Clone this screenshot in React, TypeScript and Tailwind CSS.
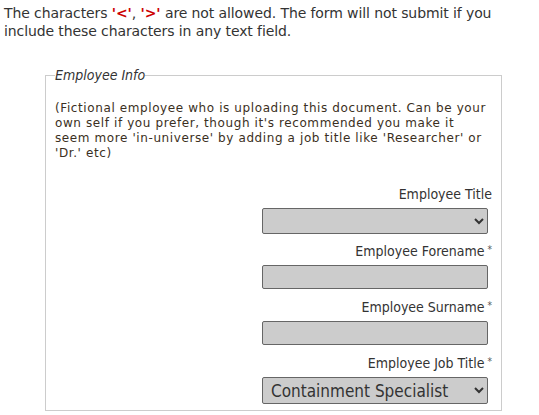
import { useState } from 'react';

const labelCls =
    "text-[14px] text-[#333] text-right leading-[18px] font-['DejaVu_Sans_Condensed','Liberation_Sans',sans-serif]";
const fieldCls = 'ml-auto mr-[4px] block w-[226px] bg-[#ccc] border border-[#666] rounded-[2px]';

const Required = () => <sup className="text-[10px] text-[#555] ml-[3px] relative -top-[3px]">*</sup>;

export default function App() {
    const [job, setJob] = useState('Containment Specialist');

    return (
        <div className="bg-white w-[539px] h-[415px] overflow-hidden text-[#333] font-['DejaVu_Sans',sans-serif]">
            <p className="px-[4px] pt-[4px] text-[14px] leading-[18px] tracking-[-0.1px]">
                The characters{' '}
                <span className="font-bold text-[#c00]">'&lt;'</span>,{' '}
                <span className="font-bold text-[#c00]">'&gt;'</span> are not allowed. The form will not submit if
                you include these characters in any text field.
            </p>

            <fieldset className="ml-[45px] mt-[25px] w-[457px] border border-[#ccc] px-[9px] pb-[6px]">
                <legend className="italic text-[14px] text-[#333] px-0 font-['DejaVu_Sans_Condensed','Liberation_Sans',sans-serif]">
                    Employee Info
                </legend>
                <p className="mt-[15px] text-[12px] leading-[15px] tracking-[0.6px] text-[#3b2f22]">
                    (Fictional employee who is uploading this document. Can be your own self if you prefer, though
                    it's recommended you make it seem more 'in-universe' by adding a job title like 'Researcher' or
                    'Dr.' etc)
                </p>

                <div className="mt-[24px] flex flex-col">
                    <label className={labelCls}>Employee Title</label>
                    <select className={`${fieldCls} mt-[5px] h-[26px]`} defaultValue="" />

                    <label className={`${labelCls} mt-[8px]`}>
                        Employee Forename<Required />
                    </label>
                    <input className={`${fieldCls} mt-[5px] h-[24px]`} />

                    <label className={`${labelCls} mt-[9px]`}>
                        Employee Surname<Required />
                    </label>
                    <input className={`${fieldCls} mt-[5px] h-[24px]`} />

                    <label className={`${labelCls} mt-[9px]`}>
                        Employee Job Title<Required />
                    </label>
                    <select
                        className={`${fieldCls} mt-[5px] h-[27px] py-0 pl-[4px] text-[17px] leading-[20px] text-[#333] font-['DejaVu_Sans_Condensed','Liberation_Sans',sans-serif]`}
                        value={job}
                        onChange={(e) => setJob(e.target.value)}
                    >
                        <option>Containment Specialist</option>
                        <option>Researcher</option>
                    </select>
                </div>
            </fieldset>
        </div>
    );
}
